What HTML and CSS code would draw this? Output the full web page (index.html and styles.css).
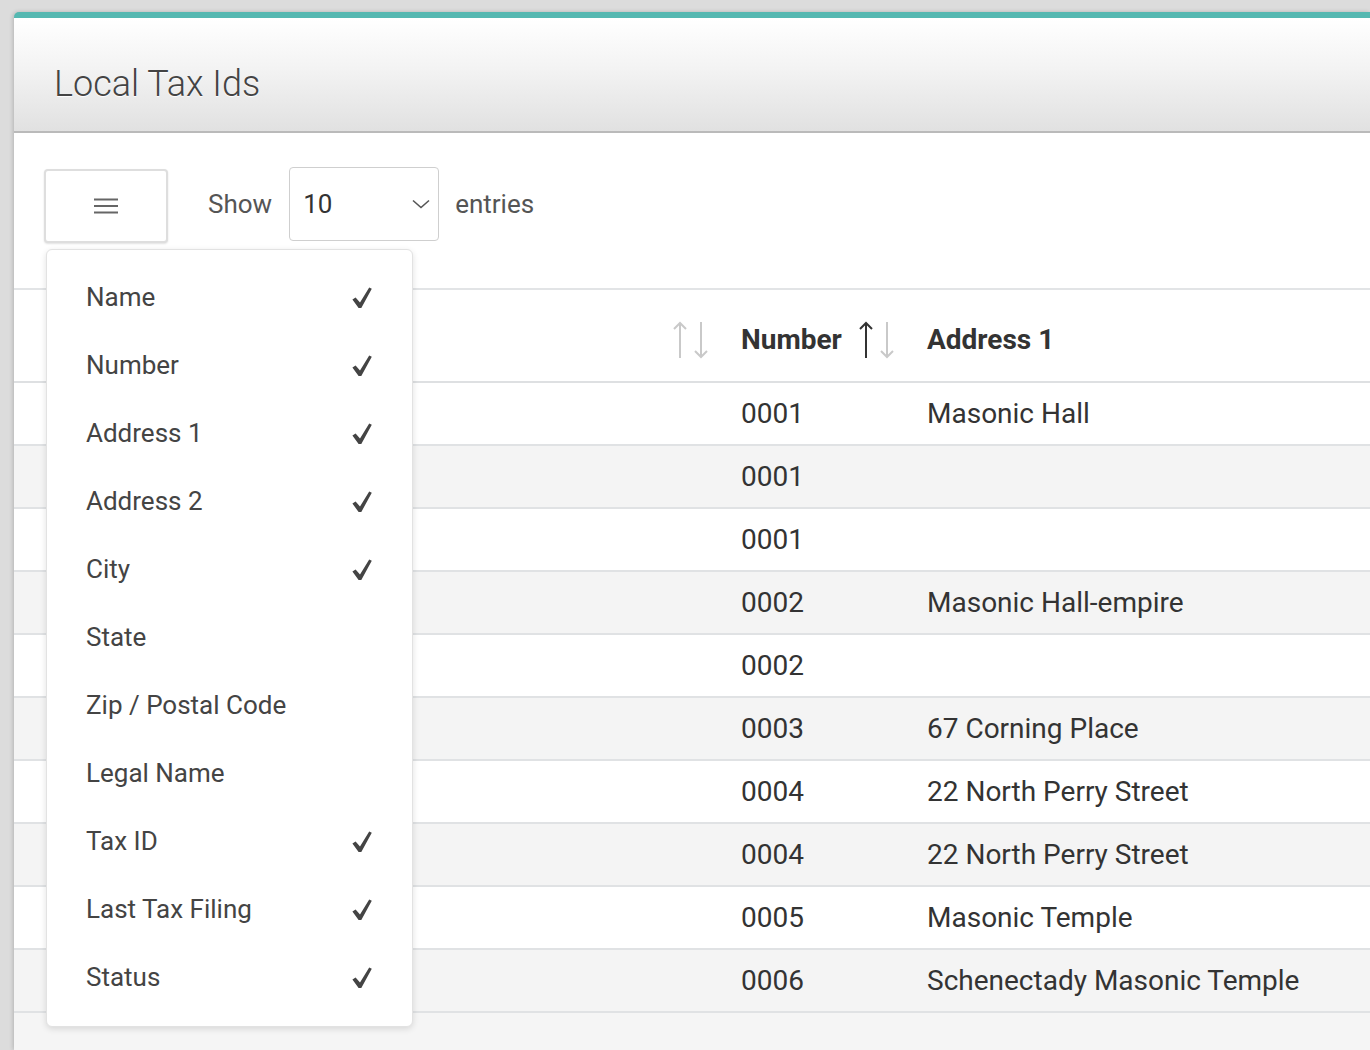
FILE: index.html
```html
<!DOCTYPE html>
<html>
<head>
<meta charset="utf-8">
<title>Local Tax Ids</title>
<link rel="stylesheet" href="styles.css">
</head>
<body>
<div class="page">
  <div class="card">
    <div class="card-header">
      <h1 class="title">Local Tax Ids</h1>
    </div>
    <div class="card-body">
      <div class="toolbar">
        <button class="menu-btn" type="button" aria-label="Columns">
          <svg class="hamburger" width="24" height="16" viewBox="0 0 24 16"><rect x="0" y="0.5" width="24" height="2" fill="#666"/><rect x="0" y="7" width="24" height="2" fill="#666"/><rect x="0" y="13.5" width="24" height="2" fill="#666"/></svg>
        </button>
        <span class="label show-label">Show</span>
        <div class="select">
          <span class="select-value">10</span>
          <svg class="chevron" width="18" height="10" viewBox="0 0 18 10"><polyline points="1,1.5 9,8.5 17,1.5" fill="none" stroke="#555" stroke-width="1.6"/></svg>
        </div>
        <span class="label">entries</span>
      </div>

      <table class="data">
        <colgroup>
          <col class="c-name">
          <col class="c-num">
          <col class="c-addr">
        </colgroup>
        <thead>
          <tr>
            <th><div class="th-inner"><span></span>
              <svg class="sort" width="36" height="38" viewBox="0 0 36 38"><g fill="none" stroke-width="2"><g stroke="#c9c9c9"><line x1="7" y1="2" x2="7" y2="37"/><polyline points="1,8 7,2 13,8"/></g><g stroke="#c9c9c9"><line x1="28" y1="1" x2="28" y2="36"/><polyline points="22,30 28,36 34,30"/></g></g></svg>
            </div></th>
            <th><div class="th-inner"><span>Number</span>
              <svg class="sort" width="36" height="38" viewBox="0 0 36 38"><g fill="none" stroke-width="2"><g stroke="#333"><line x1="7" y1="2" x2="7" y2="37"/><polyline points="1,8 7,2 13,8"/></g><g stroke="#c9c9c9"><line x1="28" y1="1" x2="28" y2="36"/><polyline points="22,30 28,36 34,30"/></g></g></svg>
            </div></th>
            <th><div class="th-inner"><span>Address 1</span></div></th>
          </tr>
        </thead>
        <tbody>
          <tr><td></td><td>0001</td><td>Masonic Hall</td></tr>
          <tr><td></td><td>0001</td><td></td></tr>
          <tr><td></td><td>0001</td><td></td></tr>
          <tr><td></td><td>0002</td><td>Masonic Hall-empire</td></tr>
          <tr><td></td><td>0002</td><td></td></tr>
          <tr><td></td><td>0003</td><td>67 Corning Place</td></tr>
          <tr><td></td><td>0004</td><td>22 North Perry Street</td></tr>
          <tr><td></td><td>0004</td><td>22 North Perry Street</td></tr>
          <tr><td></td><td>0005</td><td>Masonic Temple</td></tr>
          <tr><td></td><td>0006</td><td>Schenectady Masonic Temple</td></tr>
        </tbody>
      </table>
      <div class="after-table"></div>

      <ul class="col-menu">
        <li><span>Name</span><svg class="check" width="20" height="22" viewBox="0 0 20 22"><path d="M0.4 12.6 L3.6 10.6 L8 15.6 L17.2 0.4 L19.8 1.8 L9.3 21 L6.6 21 Z" fill="#444"/></svg></li>
        <li><span>Number</span><svg class="check" width="20" height="22" viewBox="0 0 20 22"><path d="M0.4 12.6 L3.6 10.6 L8 15.6 L17.2 0.4 L19.8 1.8 L9.3 21 L6.6 21 Z" fill="#444"/></svg></li>
        <li><span>Address 1</span><svg class="check" width="20" height="22" viewBox="0 0 20 22"><path d="M0.4 12.6 L3.6 10.6 L8 15.6 L17.2 0.4 L19.8 1.8 L9.3 21 L6.6 21 Z" fill="#444"/></svg></li>
        <li><span>Address 2</span><svg class="check" width="20" height="22" viewBox="0 0 20 22"><path d="M0.4 12.6 L3.6 10.6 L8 15.6 L17.2 0.4 L19.8 1.8 L9.3 21 L6.6 21 Z" fill="#444"/></svg></li>
        <li><span>City</span><svg class="check" width="20" height="22" viewBox="0 0 20 22"><path d="M0.4 12.6 L3.6 10.6 L8 15.6 L17.2 0.4 L19.8 1.8 L9.3 21 L6.6 21 Z" fill="#444"/></svg></li>
        <li><span>State</span></li>
        <li><span>Zip / Postal Code</span></li>
        <li><span>Legal Name</span></li>
        <li><span>Tax ID</span><svg class="check" width="20" height="22" viewBox="0 0 20 22"><path d="M0.4 12.6 L3.6 10.6 L8 15.6 L17.2 0.4 L19.8 1.8 L9.3 21 L6.6 21 Z" fill="#444"/></svg></li>
        <li><span>Last Tax Filing</span><svg class="check" width="20" height="22" viewBox="0 0 20 22"><path d="M0.4 12.6 L3.6 10.6 L8 15.6 L17.2 0.4 L19.8 1.8 L9.3 21 L6.6 21 Z" fill="#444"/></svg></li>
        <li><span>Status</span><svg class="check" width="20" height="22" viewBox="0 0 20 22"><path d="M0.4 12.6 L3.6 10.6 L8 15.6 L17.2 0.4 L19.8 1.8 L9.3 21 L6.6 21 Z" fill="#444"/></svg></li>
      </ul>
    </div>
  </div>
</div>
</body>
</html>
```
FILE: styles.css
```css
* { box-sizing: border-box; }

html, body {
  margin: 0;
  padding: 0;
  height: 100%;
}

body {
  background: #dcdcdc;
  font-family: Roboto, "Liberation Sans", Arial, sans-serif;
  color: #333;
  overflow: hidden;
}

.page {
  padding: 12px 0 0 14px;
  height: 100%;
}

.card {
  background: #f5f5f5;
  border-top: 6px solid #55b8b1;
  border-top-left-radius: 5px;
  box-shadow: -1px 0 4px rgba(0, 0, 0, 0.18);
  height: 100%;
}

.card-header {
  height: 115px;
  background: linear-gradient(to bottom, #ffffff 0%, #f3f3f3 45%, #e1e1e1 100%);
  border-bottom: 2px solid #bababa;
  padding: 48px 0 0 40px;
}

.title {
  margin: 0;
  font-size: 36px;
  line-height: 1;
  font-weight: 300;
  color: #444;
  text-shadow: 0 1px 1px #fff;
}

.card-body {
  position: relative;
  background: #f5f5f5;
}

.toolbar {
  background: #fff;
  height: 155px;
  padding: 34px 0 0 30px;
  display: flex;
  align-items: flex-start;
}

.menu-btn {
  width: 124px;
  height: 74px;
  margin-top: 2px;
  background: #fff;
  border: 2px solid #dedede;
  border-radius: 4px;
  box-shadow: 0 1px 2px rgba(0, 0, 0, 0.12);
  display: flex;
  align-items: center;
  justify-content: center;
  padding: 0;
}

.label {
  font-size: 26px;
  color: #555;
  line-height: 74px;
}

.show-label {
  margin: 0 17px 0 40px;
}

.select {
  width: 150px;
  height: 74px;
  border: 1.5px solid #cfcfcf;
  border-radius: 4px;
  background: #fff;
  display: flex;
  align-items: center;
  justify-content: space-between;
  padding: 0 8px 0 13px;
  margin-right: 16px;
}

.select-value {
  font-size: 26px;
  color: #333;
}

.data {
  width: 100%;
  border-collapse: separate;
  border-spacing: 0;
  table-layout: fixed;
  background: #fff;
}

.c-name { width: 711px; }
.c-num { width: 186px; }

.data thead th {
  height: 95px;
  border-top: 2px solid #e2e4e6;
  border-bottom: 2px solid #dee0e2;
  padding: 8px 16px 0 16px;
  text-align: left;
  font-size: 28px;
  font-weight: 700;
  color: #333;
}

.th-inner {
  display: flex;
  align-items: center;
  justify-content: space-between;
}

.sort { display: block; }

.data tbody td {
  height: 63px;
  border-bottom: 2px solid #e0e2e4;
  padding: 0 16px;
  font-size: 28px;
  color: #333;
  white-space: nowrap;
}

.data tbody tr:nth-child(even) td {
  background: #f4f4f4;
}

.after-table {
  height: 60px;
}

.col-menu {
  position: absolute;
  left: 32px;
  top: 116px;
  width: 367px;
  margin: 0;
  padding: 13px 0 15px;
  list-style: none;
  background: #fff;
  border: 1px solid #e2e2e2;
  border-radius: 6px;
  box-shadow: 0 2px 6px rgba(0, 0, 0, 0.12);
}

.col-menu li {
  height: 68px;
  display: flex;
  align-items: center;
  justify-content: space-between;
  padding: 0 40px 0 39px;
  font-size: 26px;
  color: #444;
}

.check { display: block; margin-top: 2px; }
```
